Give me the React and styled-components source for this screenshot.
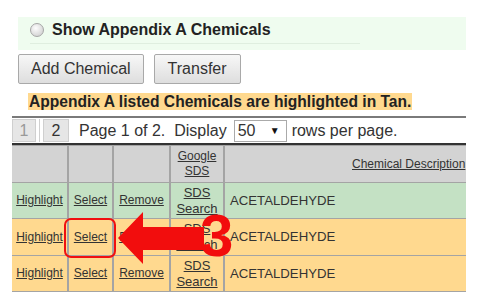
import styled, { createGlobalStyle } from "styled-components";

const Global = createGlobalStyle`
  html, body { margin: 0; padding: 0; background: #fff; }
  body { font-family: "Liberation Sans", Arial, sans-serif; color: #333; }
`;

const Page = styled.div`
  position: relative;
  width: 480px;
  height: 308px;
  overflow: hidden;
  padding-top: 17px;
  box-sizing: border-box;
`;

const GreenBand = styled.div`
  margin: 0 14px 0 18px;
  height: 33px;
  background: #effcef;
  display: flex;
  align-items: flex-start;
  padding: 4px 0 0 12px;
  box-sizing: border-box;
`;

const RadioWrap = styled.label`
  display: flex;
  align-items: center;
  gap: 8px;
  padding-bottom: 4px;
  border-bottom: 1px solid #dfeedf;
  width: 330px;
`;

const Radio = styled.span`
  width: 12px;
  height: 12px;
  border-radius: 50%;
  border: 1px solid #a6a6a6;
  background: radial-gradient(circle at 40% 35%, #fdfdfd, #d8d8d8 70%, #c4c4c4);
`;

const RadioText = styled.span`
  font-size: 16px;
  font-weight: bold;
  color: #222;
`;

const ButtonRow = styled.div`
  display: flex;
  gap: 10px;
  margin: 4px 0 0 18px;
`;

const Button = styled.button`
  height: 30px;
  padding: 0 ${(p) => p.$pad || 14}px;
  font-family: "Liberation Sans", Arial, sans-serif;
  font-size: 16px;
  color: #333;
  background: linear-gradient(#f7f7f7, #dedede);
  border: 1px solid #a9a9a9;
  border-radius: 2px;
`;

const Notice = styled.div`
  display: inline-block;
  margin: 9px 0 0 28px;
  background: #ffd98f;
  font-size: 15.6px;
  font-weight: bold;
  color: #222;
  line-height: 17px;
  padding: 0 1px;
`;

const Grid = styled.div`
  margin: 5px 0 0 12px;
  width: 454px;
  overflow: hidden;
`;

const Pager = styled.div`
  display: flex;
  align-items: center;
  height: 25px;
  border-top: 2px solid #7a7a7a;
  border-bottom: 2px solid #333;
  font-size: 16px;
  color: #333;
`;

const PageBtn = styled.span`
  width: ${(p) => p.$w}px;
  height: 23px;
  display: flex;
  align-items: center;
  justify-content: center;
  background: #e6e6e6;
  border: 1px solid #cfcfcf;
  box-sizing: border-box;
  color: ${(p) => (p.$dim ? "#999" : "#333")};
`;

const Divider = styled.span`
  width: 1px;
  height: 23px;
  background: #d0d0d0;
  margin: 0 3px;
`;

const Label = styled.span`
  margin-left: ${(p) => p.$ml || 0}px;
  white-space: nowrap;
`;

const SelectBox = styled.span`
  display: flex;
  align-items: center;
  justify-content: space-between;
  width: 53px;
  height: 22px;
  margin: 0 5px 0 7px;
  padding: 0 6px 0 3px;
  box-sizing: border-box;
  border: 1px solid #aaa;
  background: #fff;
  font-size: 16px;
  &::after {
    content: "▼";
    font-size: 10px;
    color: #111;
  }
`;

const Table = styled.table`
  border-collapse: collapse;
  table-layout: fixed;
  width: 600px;
  font-size: 12px;
`;

const Row = styled.tr`
  height: ${(p) => p.$h || 36}px;
  background: ${(p) => (p.$green ? "#c4e1c4" : "#ffd98f")};
`;

const HeadRow = styled.tr`
  height: 37px;
  background: #d3d3d3;
`;

const Cell = styled.td`
  border: 1px solid #a4a4a4;
  border-width: 1px 2px 1px 0;
  text-align: ${(p) => p.$align || "center"};
  padding: ${(p) => p.$pad || "0"};
  background: ${(p) => p.$bg || "transparent"};
  vertical-align: middle;
  line-height: 15px;
  &:first-child { border-left: 0; }
`;

const Link = styled.a`
  color: #333;
  text-decoration: underline;
  font-size: ${(p) => p.$size || 12}px;
`;

const Name = styled.span`
  font-size: 13.2px;
  color: #333;
`;

const Overlay = styled.div`
  position: absolute;
  left: 0;
  top: 0;
  pointer-events: none;
`;

const Callout = styled.div`
  position: absolute;
  left: 64px;
  top: 218px;
  width: 52px;
  height: 40px;
  box-sizing: border-box;
  border: 2px solid #f01010;
  border-radius: 7px;
`;

const Step = styled.span`
  position: absolute;
  left: 200px;
  top: 201px;
  font-size: 60px;
  line-height: 70px;
  font-weight: bold;
  color: #f20d0d;
`;

const Arrow = () => (
  <svg
    width="100"
    height="60"
    viewBox="0 0 100 60"
    style={{ position: "absolute", left: 110, top: 208 }}
  >
    <path d="M8 30 L33 4 L33 19 L94 19 L94 42 L33 42 L33 56 Z" fill="#f20d0d" />
  </svg>
);

const rows = [
  { green: true, h: 36 },
  { green: false, h: 37 },
  { green: false, h: 36 },
];

export default function App() {
  return (
    <>
      <Global />
      <Page>
        <GreenBand>
          <RadioWrap>
            <Radio />
            <RadioText>Show Appendix A Chemicals</RadioText>
          </RadioWrap>
        </GreenBand>
        <ButtonRow>
          <Button $pad={12}>Add Chemical</Button>
          <Button $pad={13}>Transfer</Button>
        </ButtonRow>
        <Notice>Appendix A listed Chemicals are highlighted in Tan.</Notice>
        <Grid>
          <Pager>
            <PageBtn $w={24} $dim>1</PageBtn>
            <Divider />
            <PageBtn $w={26}>2</PageBtn>
            <Label $ml={10}>Page 1 of 2.&nbsp;&nbsp;Display</Label>
            <SelectBox>50</SelectBox>
            <Label>rows per page.</Label>
          </Pager>
          <Table>
            <colgroup>
              <col style={{ width: 56 }} />
              <col style={{ width: 45 }} />
              <col style={{ width: 57 }} />
              <col style={{ width: 54 }} />
              <col />
            </colgroup>
            <tbody>
              <HeadRow>
                <Cell />
                <Cell />
                <Cell />
                <Cell>
                  <Link $size={12}>Google</Link>
                  <br />
                  <Link $size={12}>SDS</Link>
                </Cell>
                <Cell $align="left" $pad="0 0 0 127px">
                  <Link $size={12}>Chemical Description</Link>
                </Cell>
              </HeadRow>
              {rows.map((r, i) => (
                <Row key={i} $green={r.green} $h={r.h}>
                  <Cell><Link>Highlight</Link></Cell>
                  <Cell><Link>Select</Link></Cell>
                  <Cell><Link>Remove</Link></Cell>
                  <Cell $bg={i === 0 ? "#c4e1c4" : undefined}>
                    <Link $size={13}>SDS</Link>
                    <br />
                    <Link $size={13}>Search</Link>
                  </Cell>
                  <Cell $align="left" $pad="0 0 0 5px">
                    <Name>ACETALDEHYDE</Name>
                  </Cell>
                </Row>
              ))}
            </tbody>
          </Table>
        </Grid>
        <Overlay>
          <Callout />
          <Arrow />
          <Step>3</Step>
        </Overlay>
      </Page>
    </>
  );
}
